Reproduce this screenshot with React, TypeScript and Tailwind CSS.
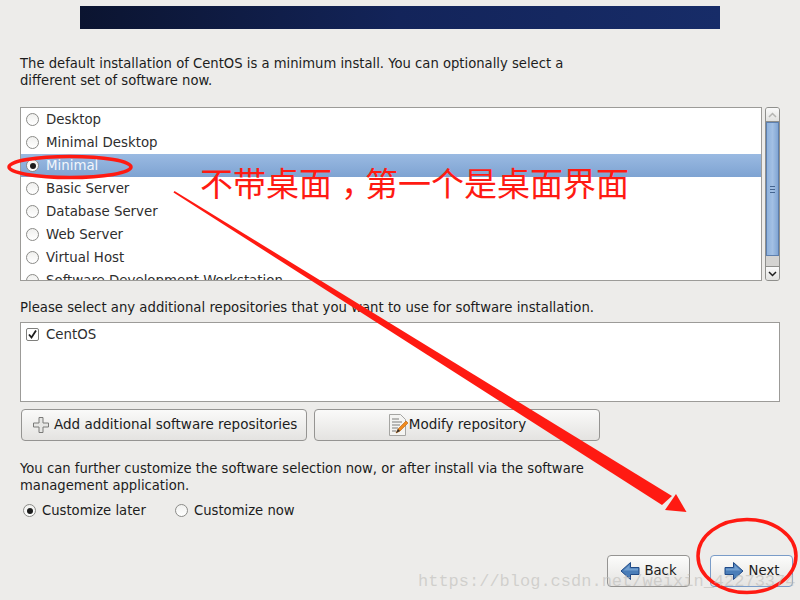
import React from "react";

const packages = [
  "Desktop",
  "Minimal Desktop",
  "Minimal",
  "Basic Server",
  "Database Server",
  "Web Server",
  "Virtual Host",
  "Software Development Workstation",
];

function Radio({ checked }: { checked?: boolean }) {
  return (
    <span className="flex h-[13px] w-[13px] shrink-0 items-center justify-center rounded-full border border-[#8b8b88] bg-gradient-to-b from-[#f0f0ee] to-white">
      {checked && <span className="h-[6px] w-[6px] rounded-full bg-[#1c1c1c]" />}
    </span>
  );
}

function ArrowIcon({ flip }: { flip?: boolean }) {
  return (
    <svg width="20" height="20" viewBox="0 0 20 20" className={flip ? "-scale-x-100" : ""}>
      <path d="M1 6.5h8.5V1.5L19 10l-9.5 8.5v-5H1z" fill="#4a7db8" stroke="#204a87" strokeWidth="1" strokeLinejoin="round" />
      <path d="M2 7.5h8.5V4l6 5.5H2z" fill="#729fcf" />
    </svg>
  );
}

function PlusIcon() {
  return (
    <svg width="16" height="16" viewBox="0 0 16 16">
      <path d="M6 .5h4v5.5h5.500v4H10v5.500H6V10H.5V6H6z" fill="#e6e6e4" stroke="#7a7a78" strokeWidth="1" />
    </svg>
  );
}

function EditIcon() {
  return (
    <svg width="20" height="22" viewBox="0 0 20 22">
      <path d="M1.500.5h11l5 5v16h-16z" fill="#f4f4f2" stroke="#a5a5a2" />
      <path d="M4 5h7M4 8h10M4 11h8M4 14h6M4 17h4" stroke="#7d7d7a" strokeWidth="1" />
      <path d="M8 19l2-4 8-8 2 2-8 8z" fill="#f08a1d" stroke="#b85f0a" strokeWidth="0.6" />
      <path d="M8 19l2-4 2 2z" fill="#2e2e2e" />
    </svg>
  );
}

function ScrollBar() {
  return (
    <div className="ml-[3px] flex w-[15px] flex-col overflow-hidden rounded-[3px] border border-[#8f8f8c] bg-[#d4d3d1]">
      <div className="flex h-[14px] items-center justify-center border-b border-[#8f8f8c] bg-gradient-to-b from-[#fafafa] to-[#e2e2e0]">
        <svg width="9" height="6" viewBox="0 0 9 6">
          <path d="M1 5l3.500-3.500L8 5" fill="none" stroke="#b5b5b2" strokeWidth="1.500" />
        </svg>
      </div>
      <div className="flex h-[134px] items-center justify-center border border-[#5d7fae] bg-gradient-to-r from-[#8fb2dc] via-[#a3c0e4] to-[#82a6d4]">
        <div className="flex flex-col gap-[2px]">
          <div className="h-px w-[5px] bg-[#44648f]" />
          <div className="h-px w-[5px] bg-[#44648f]" />
          <div className="h-px w-[5px] bg-[#44648f]" />
        </div>
      </div>
      <div className="flex-1" />
      <div className="flex h-[14px] items-center justify-center border-t border-[#8f8f8c] bg-gradient-to-b from-[#fafafa] to-[#e2e2e0]">
        <svg width="9" height="6" viewBox="0 0 9 6">
          <path d="M1 1l3.500 3.500L8 1" fill="none" stroke="#1e1e1e" strokeWidth="1.500" />
        </svg>
      </div>
    </div>
  );
}

export default function App() {
  return (
    <div className="relative h-[600px] w-[800px] overflow-hidden bg-[#edecea] font-['DejaVu_Sans',sans-serif] text-[13.25px] leading-[17px] text-[#1c1c1c]">
      {/* Header banner */}
      <div className="mx-auto mt-[6px] h-[23px] w-[640px] bg-gradient-to-r from-[#0b1430] via-[#13245a] to-[#172c68]" />

      <div className="px-[20px] pt-[26px]">
        <p className="text-[13.18px]">
          The default installation of CentOS is a minimum install. You can optionally select a
          <br />
          different set of software now.
        </p>

        {/* Package list */}
        <div className="mt-[18px] flex h-[174px]">
          <div className="w-[742px] overflow-hidden border border-[#9c9b98] bg-white text-[13.35px]">
            {packages.map((name) => (
              <div
                key={name}
                className={
                  name === "Minimal"
                    ? "flex h-[23px] shrink-0 items-center gap-[7px] bg-gradient-to-b from-[#9abae2] to-[#7ea3d2] pl-[5px] text-[#f2f6fb]"
                    : "flex h-[23px] shrink-0 items-center gap-[7px] pl-[5px] text-[#2e2e2e]"
                }
              >
                <Radio checked={name === "Minimal"} />
                <span>{name}</span>
              </div>
            ))}
          </div>
          <ScrollBar />
        </div>

        <p className="mt-[18px]">Please select any additional repositories that you want to use for software installation.</p>

        {/* Repositories */}
        <div className="mt-[6px] h-[80px] w-[760px] border border-[#9c9b98] bg-white pl-[5px] pt-[3px] text-[13.35px]">
          <div className="flex items-center gap-[7px] text-[#2e2e2e]">
            <span className="flex h-[13px] w-[13px] items-center justify-center rounded-[2px] border border-[#7f7f7c] bg-white">
              <svg width="11" height="11" viewBox="0 0 11 11">
                <path d="M2 5.500l2.500 3L9 1.500" fill="none" stroke="#1c1c1c" strokeWidth="1.800" />
              </svg>
            </span>
            <span>CentOS</span>
          </div>
        </div>

        <div className="mt-[7px] ml-px flex gap-[7px] text-[13.5px]">
          <button className="flex h-[32px] w-[286px] items-center gap-[5px] rounded-[4px] border border-[#959492] bg-gradient-to-b from-[#fafaf9] to-[#e4e3e1] pl-[11px]">
            <PlusIcon />
            <span className="-translate-y-px">Add additional software repositories</span>
          </button>
          <button className="flex h-[32px] w-[286px] items-center justify-center gap-[1px] rounded-[4px] border border-[#959492] bg-gradient-to-b from-[#fafaf9] to-[#e4e3e1]">
            <EditIcon />
            <span className="-translate-y-px">Modify repository</span>
          </button>
        </div>

        <p className="mt-[19px] text-[13.18px]">
          You can further customize the software selection now, or after install via the software
          <br />
          management application.
        </p>

        <div className="mt-[8px] flex items-center pl-[3px] text-[13.2px]">
          <Radio checked />
          <span className="ml-[6px] w-[133px]">Customize later</span>
          <Radio />
          <span className="ml-[6px]">Customize now</span>
        </div>

        <div className="mt-[36px] -mr-[13px] flex justify-end gap-[20px]">
          <button className="flex h-[32px] w-[83px] items-center justify-center gap-[4px] rounded-[4px] border border-[#959492] bg-gradient-to-b from-[#fcfcfb] to-[#e4e3e1]">
            <ArrowIcon flip />
            <span className="-translate-y-px">Back</span>
          </button>
          <button className="flex h-[32px] w-[83px] items-center justify-center gap-[5px] rounded-[4px] border border-[#7a9cc8] bg-gradient-to-b from-[#fcfcfb] to-[#e4e3e1]">
            <ArrowIcon />
            <span className="-translate-y-px">Next</span>
          </button>
        </div>
      </div>

      {/* Red hand-drawn annotations */}
      <svg className="absolute left-0 top-0" width="800" height="600" viewBox="0 0 800 600">
        <path d="M174.500 191L672 496L662 505L173.500 192.500z" fill="#ff1a12" />
        <path d="M686.500 512L676 494L665 510z" fill="#ff1a12" />
        <ellipse cx="70" cy="167" rx="61" ry="10.500" fill="none" stroke="#ff1a12" strokeWidth="3.500" />
        <ellipse cx="747" cy="556" rx="49" ry="36.500" fill="none" stroke="#ff1a12" strokeWidth="3.500" />
      </svg>
      <div className="absolute left-[200px] top-[161px] whitespace-nowrap font-['Noto_Sans_CJK_SC',sans-serif] text-[33px] leading-[42px] text-[#ff1a12]">
        不带桌面<span className="inline-block w-[33px] overflow-hidden pl-[9px] align-top">，</span>第一个是桌面界面
      </div>

      {/* Blog watermark */}
      <div className="absolute left-[418px] top-[571px] whitespace-nowrap font-['Liberation_Mono',monospace] text-[17px] leading-[22px] text-[#bdbcb9]/60">
        https://blog.csdn.net/weixin_42273374
      </div>
    </div>
  );
}
